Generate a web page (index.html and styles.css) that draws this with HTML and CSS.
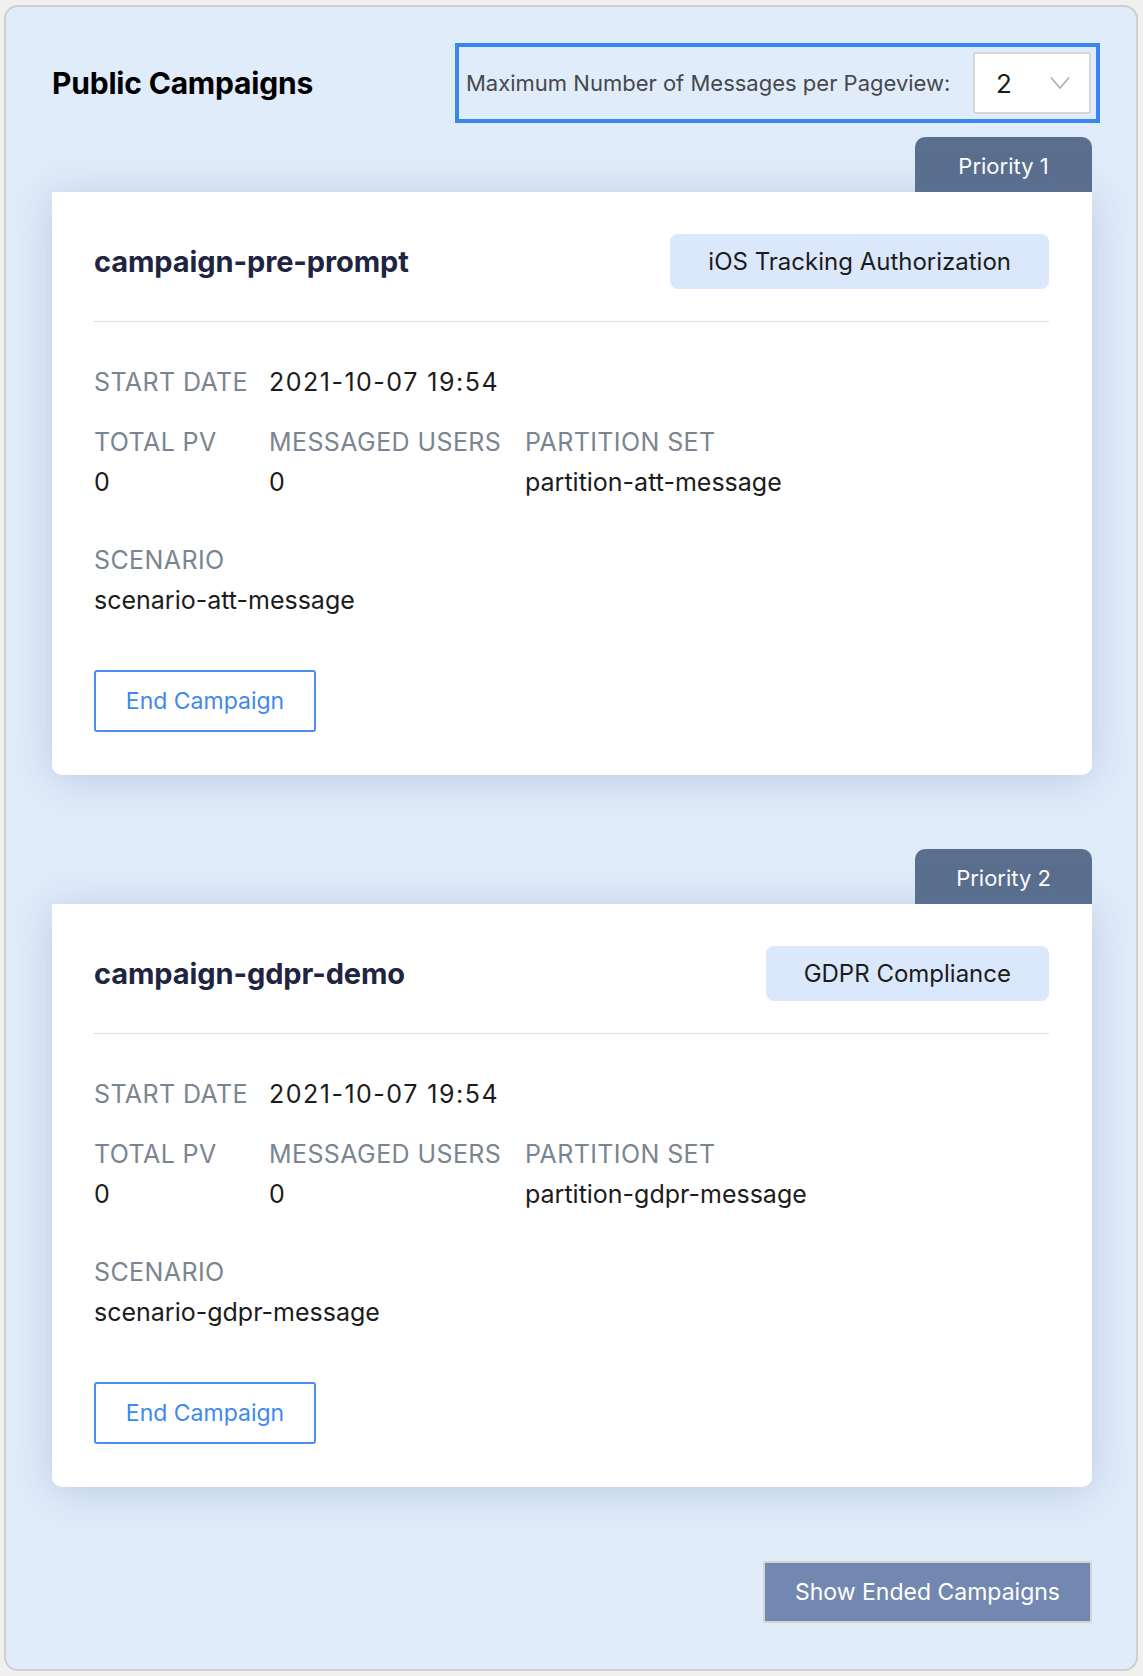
FILE: index.html
```html
<!DOCTYPE html>
<html lang="en">
<head>
<meta charset="utf-8">
<title>Public Campaigns</title>
<link rel="stylesheet" href="styles.css">
</head>
<body>
<div class="panel">
  <div class="panel-head">
    <h1 class="panel-title">Public Campaigns</h1>
    <div class="max-box">
      <span class="max-label">Maximum Number of Messages per Pageview:</span>
      <div class="select">
        <span class="select-value">2</span>
        <svg class="chevron" width="20" height="14" viewBox="0 0 20 14"><path d="M1 1.5 L10 12 L19 1.5" fill="none" stroke="#a9adb3" stroke-width="1.6"/></svg>
      </div>
    </div>
  </div>

  <div class="campaign">
    <div class="priority">Priority 1</div>
    <div class="card">
      <div class="card-head">
        <h2 class="card-title">campaign-pre-prompt</h2>
        <span class="badge">iOS Tracking Authorization</span>
      </div>
      <div class="divider"></div>
      <div class="start-row">
        <span class="label start-label">START DATE</span>
        <span class="value date">2021-10-07 19:54</span>
      </div>
      <div class="stats">
        <div class="stat">
          <div class="label">TOTAL PV</div>
          <div class="value stat-value">0</div>
        </div>
        <div class="stat">
          <div class="label">MESSAGED USERS</div>
          <div class="value stat-value">0</div>
        </div>
        <div class="stat">
          <div class="label">PARTITION SET</div>
          <div class="value stat-value">partition-att-message</div>
        </div>
      </div>
      <div class="scenario">
        <div class="label">SCENARIO</div>
        <div class="value stat-value">scenario-att-message</div>
      </div>
      <button class="end-btn">End Campaign</button>
    </div>
  </div>

  <div class="campaign">
    <div class="priority">Priority 2</div>
    <div class="card">
      <div class="card-head">
        <h2 class="card-title">campaign-gdpr-demo</h2>
        <span class="badge">GDPR Compliance</span>
      </div>
      <div class="divider"></div>
      <div class="start-row">
        <span class="label start-label">START DATE</span>
        <span class="value date">2021-10-07 19:54</span>
      </div>
      <div class="stats">
        <div class="stat">
          <div class="label">TOTAL PV</div>
          <div class="value stat-value">0</div>
        </div>
        <div class="stat">
          <div class="label">MESSAGED USERS</div>
          <div class="value stat-value">0</div>
        </div>
        <div class="stat">
          <div class="label">PARTITION SET</div>
          <div class="value stat-value">partition-gdpr-message</div>
        </div>
      </div>
      <div class="scenario">
        <div class="label">SCENARIO</div>
        <div class="value stat-value">scenario-gdpr-message</div>
      </div>
      <button class="end-btn">End Campaign</button>
    </div>
  </div>

  <div class="panel-foot">
    <button class="show-btn">Show Ended Campaigns</button>
  </div>
</div>
</body>
</html>
```

FILE: styles.css
```css
* { box-sizing: border-box; }

html, body {
  margin: 0;
  padding: 0;
  background: #f0f0f0;
  font-family: "Inter", "Noto Sans", sans-serif;
}

body {
  padding: 5px 5px 4px 4px;
}

.panel {
  background: #e1ecfa;
  border: 2px solid #cdcfd2;
  border-radius: 14px;
  padding: 36px 44px 46px 46px;
  display: flex;
  flex-direction: column;
}

.panel-head {
  display: flex;
  justify-content: space-between;
  align-items: center;
  height: 80px;
}

.panel-title {
  margin: 0;
  font-size: 30px;
  font-weight: 700;
  color: #000;
  letter-spacing: -0.2px;
}

.max-box {
  display: flex;
  align-items: center;
  justify-content: space-between;
  width: 645px;
  height: 80px;
  border: 4px solid #3a86f0;
  padding: 5px 5px 5px 7px;
  margin-right: -8px;
}

.max-label {
  font-size: 22px;
  color: #45484d;
  white-space: nowrap;
}

.select {
  width: 118px;
  height: 62px;
  background: #fff;
  border: 2px solid #d4d6d9;
  border-radius: 3px;
  display: flex;
  align-items: center;
  padding-left: 21px;
  flex-shrink: 0;
}

.select-value {
  font-size: 26px;
  color: #1c1c1c;
  width: 54px;
}

.chevron { display: block; }

.campaign {
  display: flex;
  flex-direction: column;
  margin-top: 14px;
}

.campaign + .campaign { margin-top: 74px; }

.priority {
  align-self: flex-end;
  width: 177px;
  height: 55px;
  background: #5a6e8e;
  color: #fff;
  border-radius: 10px 10px 0 0;
  font-size: 22px;
  display: flex;
  align-items: center;
  justify-content: center;
  padding-top: 2px;
}

.card {
  background: #fff;
  border-radius: 0 0 10px 10px;
  box-shadow: 0 4px 42px rgba(95, 125, 170, 0.30);
  padding: 42px 43px 43px 42px;
  display: flex;
  flex-direction: column;
  align-items: flex-start;
}

.card-head {
  display: flex;
  justify-content: space-between;
  align-items: center;
  width: 100%;
  height: 55px;
}

.card-title {
  margin: 0;
  font-size: 29px;
  font-weight: 700;
  color: #1f2540;
  letter-spacing: -0.1px;
}

.badge {
  height: 55px;
  display: flex;
  align-items: center;
  padding: 0 38px;
  background: #dbe8fb;
  border-radius: 8px;
  font-size: 24px;
  color: #1c1c1c;
}

.divider {
  width: 100%;
  height: 1px;
  background: #d3dde8;
  margin-top: 32px;
}

.label {
  font-size: 25px;
  line-height: 30px;
  letter-spacing: 0.4px;
  color: #7b8591;
}

.value {
  font-size: 25px;
  line-height: 30px;
  color: #1c1c1c;
}

.date { letter-spacing: 1.5px; }

.start-row {
  display: flex;
  margin-top: 45px;
}

.start-label { width: 175px; flex-shrink: 0; }

.stats {
  display: grid;
  grid-template-columns: 175px 256px 1fr;
  width: 100%;
  margin-top: 30px;
}

.stat-value { margin-top: 10px; }

.scenario { margin-top: 48px; }

.end-btn {
  margin-top: 55px;
  width: 222px;
  height: 62px;
  background: #fff;
  border: 2px solid #4a8ff0;
  border-radius: 3px;
  color: #3f88f0;
  font-family: inherit;
  font-size: 23px;
  padding: 0;
}

.panel-foot {
  display: flex;
  justify-content: flex-end;
  margin-top: 74px;
}

.show-btn {
  width: 329px;
  height: 62px;
  background: #7388b0;
  border: 2px solid #d2d4d8;
  border-radius: 2px;
  color: #fff;
  font-family: inherit;
  font-size: 23px;
  padding: 0;
}
```
